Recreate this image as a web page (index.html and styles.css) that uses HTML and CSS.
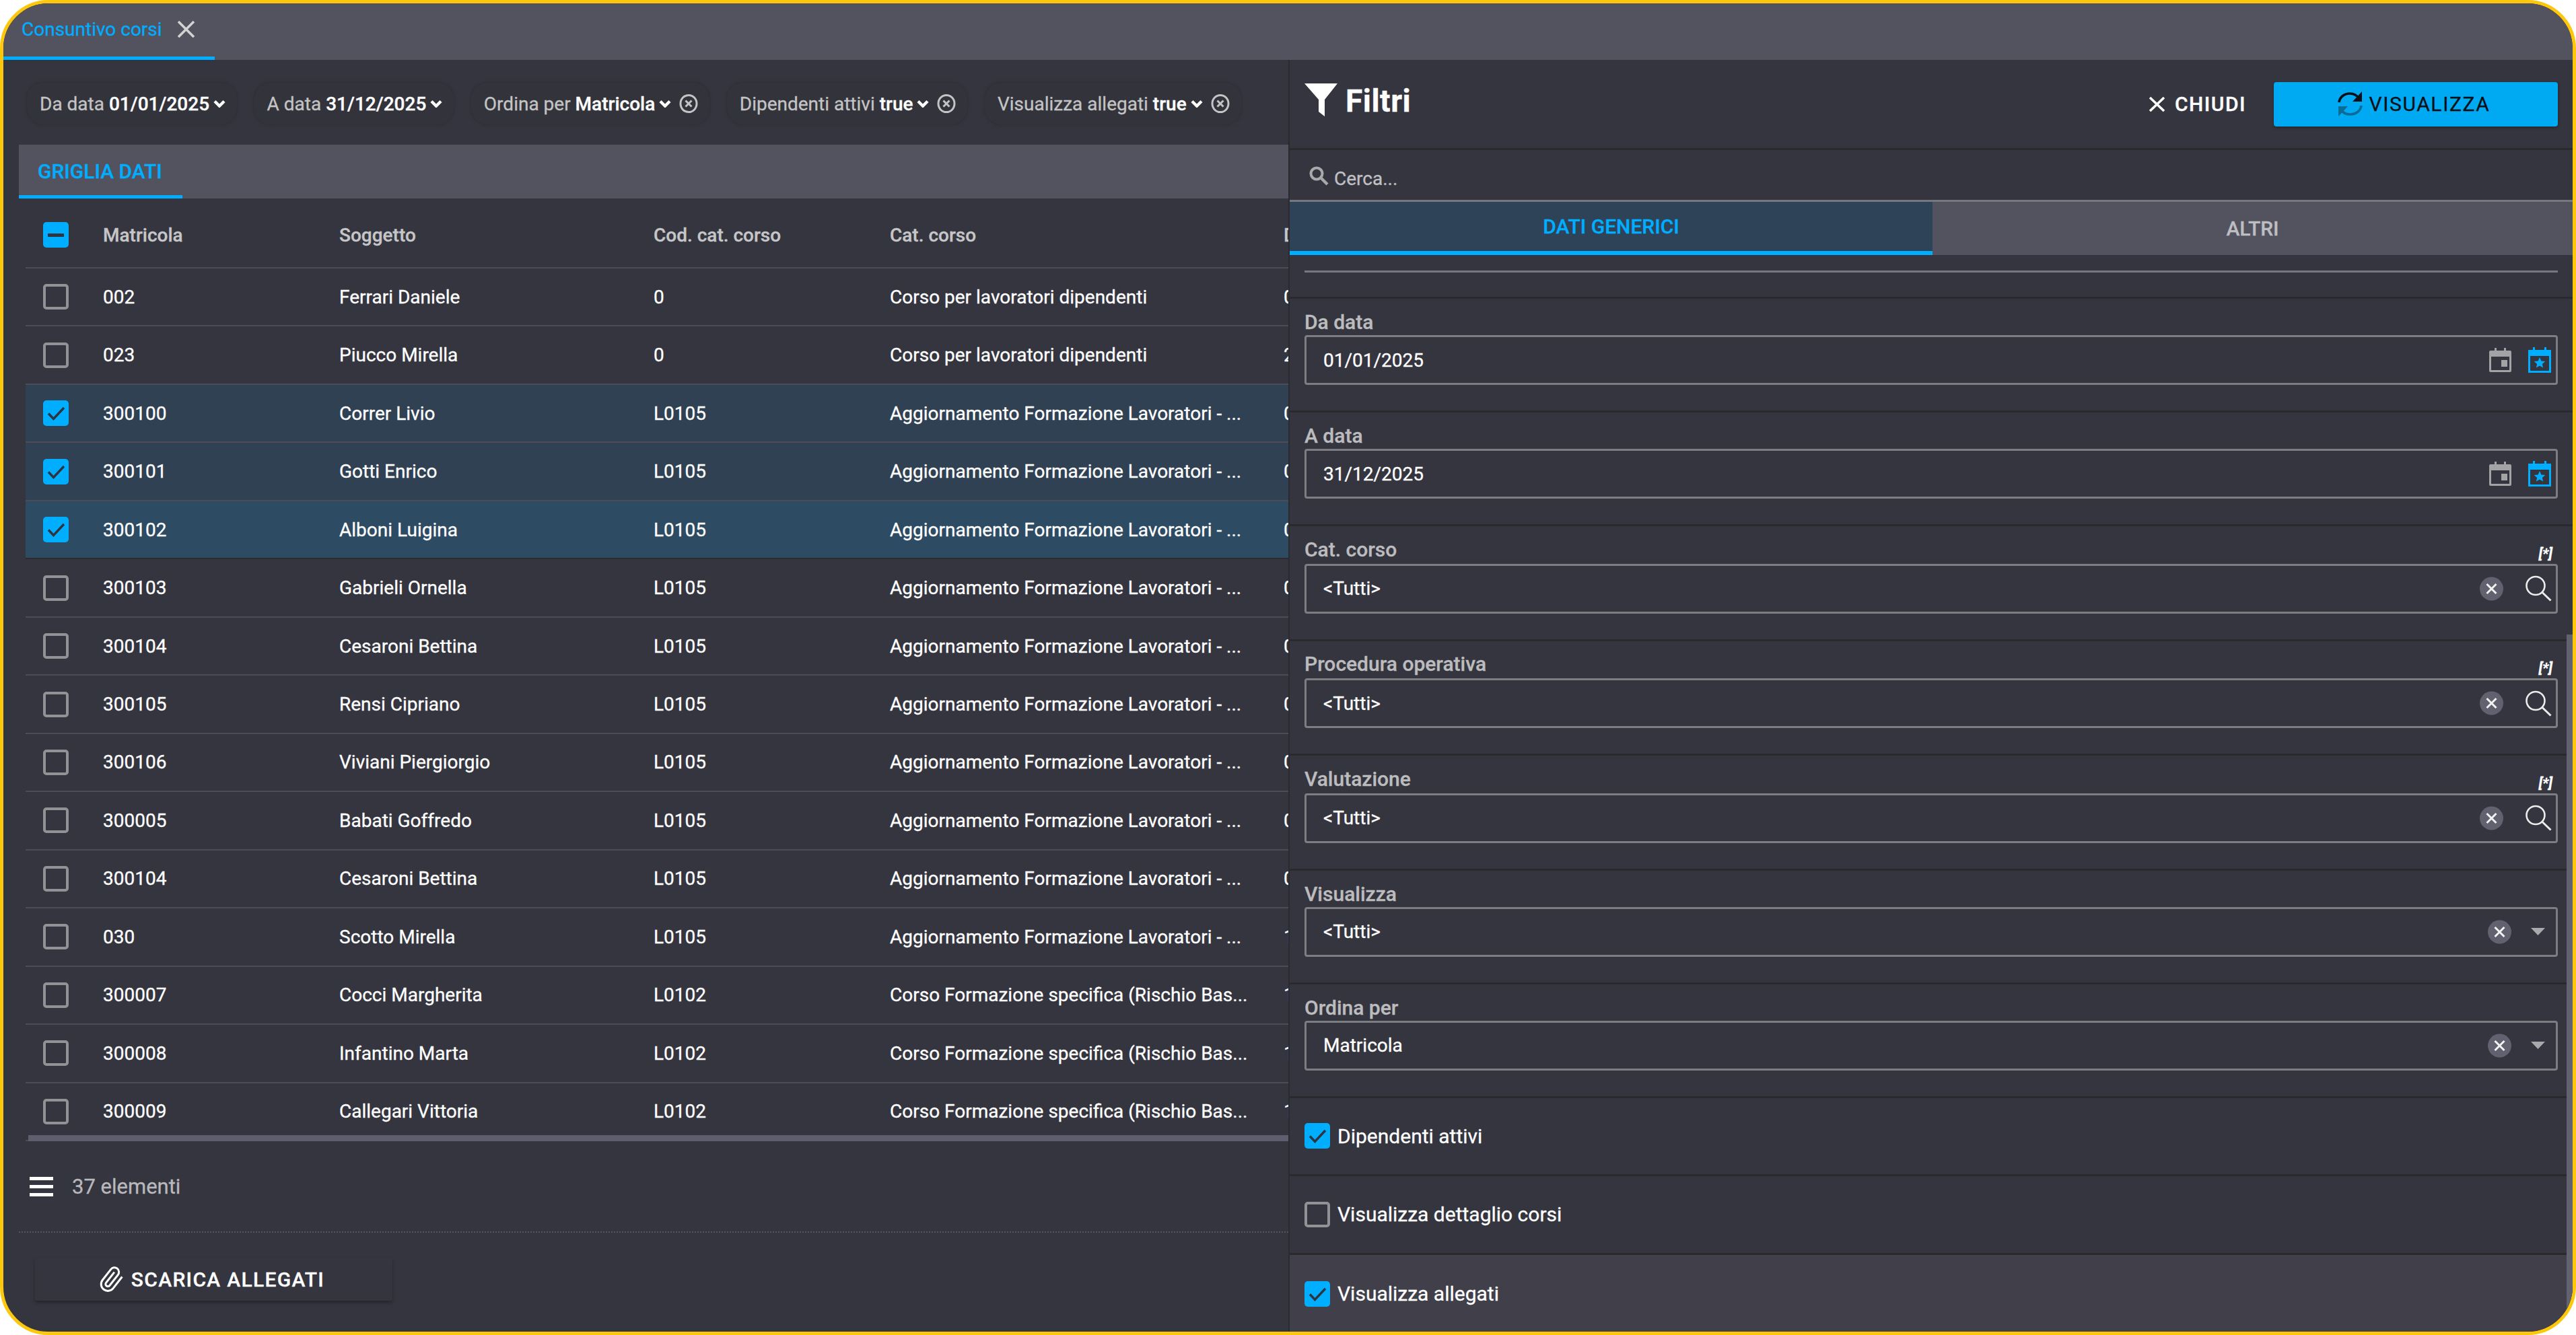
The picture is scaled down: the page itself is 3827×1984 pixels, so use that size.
FILE: index.html
```html
<!DOCTYPE html>
<html lang="it">
<head>
    <meta charset="UTF-8">
    <title>Consuntivo corsi</title>
    <link rel="stylesheet" href="styles.css">
</head>
<body>
    <!-- icone riusate -->
    <svg class="sprite" xmlns="http://www.w3.org/2000/svg">
        <symbol id="i-tick" viewBox="0 0 37 38"><path d="M7 19.5l7.5 8L30 11" fill="none" stroke="#2f3440" stroke-width="3.4"/></symbol>
        <symbol id="i-chev" viewBox="0 0 18 12"><path d="M2 2.5l7 7 7-7" fill="none" stroke="#fff" stroke-width="4.4"/></symbol>
        <symbol id="i-circle-x" viewBox="0 0 28 30"><ellipse cx="14" cy="15" rx="12" ry="12.6" fill="none" stroke="#c4c4c4" stroke-width="3"/><path d="M9.5 10.5l9 9M18.5 10.5l-9 9" stroke="#c4c4c4" stroke-width="3"/></symbol>
        <symbol id="i-cal" viewBox="0 0 33 36"><path d="M8 0h3v4h11V0h3v4h6a2 2 0 0 1 2 2v28a2 2 0 0 1-2 2H2a2 2 0 0 1-2-2V6a2 2 0 0 1 2-2h6z" fill="#a3a3a6"/><rect x="3" y="13" width="27" height="20" fill="#35353f"/><rect x="18" y="18" width="9" height="10" fill="#a3a3a6"/></symbol>
        <symbol id="i-cal-star" viewBox="0 0 34 38"><path d="M7 0h3v4h14V0h3v4h7v34H0V4h7z" fill="#00aeff"/><rect x="3" y="13" width="28" height="22" fill="#35353f"/><path d="M17 15l2.4 5.4 5.8.6-4.3 3.9 1.2 5.7-5.1-3-5.1 3 1.2-5.7L8.800 21l5.800-.6z" fill="#00aeff"/></symbol>
        <symbol id="i-clear" viewBox="0 0 35 36"><circle cx="17.500" cy="18" r="17.500" fill="#62616f"/><path d="M10.500 11l14 14M24.500 11l-14 14" stroke="#f2f2f2" stroke-width="3"/></symbol>
        <symbol id="i-lens" viewBox="0 0 40 39"><circle cx="16" cy="15.500" r="13.500" fill="none" stroke="#ececec" stroke-width="2.600"/><path d="M26 25.500l12.500 12" stroke="#ececec" stroke-width="3"/></symbol>
    </svg>

    <div class="frame">
        <div class="tabbar">
            <div class="doc-tab">
                <span>Consuntivo corsi</span>
                <svg class="doc-tab-x" viewBox="0 0 27 27"><path d="M2 2l23 23M25 2L2 25" stroke="#d2d2d2" stroke-width="3.600"/></svg>
            </div>
        </div>

        <div class="workspace">
            <!-- GRIGLIA -->
            <div class="main">
                <div class="chips">
                    <div class="chip">Da data <b>01/01/2025</b><svg class="chev"><use href="#i-chev"/></svg></div>
                    <div class="chip">A data <b>31/12/2025</b><svg class="chev"><use href="#i-chev"/></svg></div>
                    <div class="chip">Ordina per <b>Matricola</b><svg class="chev"><use href="#i-chev"/></svg><svg class="chip-x"><use href="#i-circle-x"/></svg></div>
                    <div class="chip">Dipendenti attivi <b>true</b><svg class="chev"><use href="#i-chev"/></svg><svg class="chip-x"><use href="#i-circle-x"/></svg></div>
                    <div class="chip">Visualizza allegati <b>true</b><svg class="chev"><use href="#i-chev"/></svg><svg class="chip-x"><use href="#i-circle-x"/></svg></div>
                </div>

                <div class="band">
                    <div class="band-tab">GRIGLIA DATI</div>
                </div>

                <div class="grid">
                    <div class="row head">
                        <span class="box on"><i class="dash"></i></span>
                        <span>Matricola</span><span>Soggetto</span><span>Cod. cat. corso</span><span>Cat. corso</span><span>Data</span>
                    </div>
                    <div class="row"><span class="box"></span><span>002</span><span>Ferrari Daniele</span><span>0</span><span>Corso per lavoratori dipendenti</span><span>0</span></div>
                    <div class="row"><span class="box"></span><span>023</span><span>Piucco Mirella</span><span>0</span><span>Corso per lavoratori dipendenti</span><span>2</span></div>
                    <div class="row sel"><span class="box on"><svg><use href="#i-tick"/></svg></span><span>300100</span><span>Correr Livio</span><span>L0105</span><span>Aggiornamento Formazione Lavoratori - ...</span><span>0</span></div>
                    <div class="row sel"><span class="box on"><svg><use href="#i-tick"/></svg></span><span>300101</span><span>Gotti Enrico</span><span>L0105</span><span>Aggiornamento Formazione Lavoratori - ...</span><span>0</span></div>
                    <div class="row sel hover"><span class="box on"><svg><use href="#i-tick"/></svg></span><span>300102</span><span>Alboni Luigina</span><span>L0105</span><span>Aggiornamento Formazione Lavoratori - ...</span><span>0</span></div>
                    <div class="row"><span class="box"></span><span>300103</span><span>Gabrieli Ornella</span><span>L0105</span><span>Aggiornamento Formazione Lavoratori - ...</span><span>0</span></div>
                    <div class="row"><span class="box"></span><span>300104</span><span>Cesaroni Bettina</span><span>L0105</span><span>Aggiornamento Formazione Lavoratori - ...</span><span>0</span></div>
                    <div class="row"><span class="box"></span><span>300105</span><span>Rensi Cipriano</span><span>L0105</span><span>Aggiornamento Formazione Lavoratori - ...</span><span>0</span></div>
                    <div class="row"><span class="box"></span><span>300106</span><span>Viviani Piergiorgio</span><span>L0105</span><span>Aggiornamento Formazione Lavoratori - ...</span><span>0</span></div>
                    <div class="row"><span class="box"></span><span>300005</span><span>Babati Goffredo</span><span>L0105</span><span>Aggiornamento Formazione Lavoratori - ...</span><span>0</span></div>
                    <div class="row"><span class="box"></span><span>300104</span><span>Cesaroni Bettina</span><span>L0105</span><span>Aggiornamento Formazione Lavoratori - ...</span><span>0</span></div>
                    <div class="row"><span class="box"></span><span>030</span><span>Scotto Mirella</span><span>L0105</span><span>Aggiornamento Formazione Lavoratori - ...</span><span>1</span></div>
                    <div class="row"><span class="box"></span><span>300007</span><span>Cocci Margherita</span><span>L0102</span><span>Corso Formazione specifica (Rischio Bas...</span><span>1</span></div>
                    <div class="row"><span class="box"></span><span>300008</span><span>Infantino Marta</span><span>L0102</span><span>Corso Formazione specifica (Rischio Bas...</span><span>1</span></div>
                    <div class="row"><span class="box"></span><span>300009</span><span>Callegari Vittoria</span><span>L0102</span><span>Corso Formazione specifica (Rischio Bas...</span><span>1</span></div>
                    <div class="grid-scroll"></div>
                </div>

                <div class="count">
                    <span class="burger"><i></i><i></i><i></i></span>
                    <span>37 elementi</span>
                </div>

                <div class="actions">
                    <button class="download">
                        <svg class="clip" viewBox="0 0 24 24"><path d="M21.440 11.050l-9.190 9.190a6 6 0 0 1-8.490-8.490l8.570-8.570A4 4 0 1 1 18 8.840l-8.590 8.570a2 2 0 0 1-2.830-2.830l8.490-8.480" fill="none" stroke="#fff" stroke-width="1.800"/></svg>
                        SCARICA ALLEGATI
                    </button>
                </div>
            </div>

            <!-- FILTRI -->
            <div class="panel">
                <div class="panel-head">
                    <svg class="funnel" viewBox="0 0 49 49"><path d="M0 0h49L30 24v25l-9-7V24z" fill="#fff"/></svg>
                    <span class="panel-title">Filtri</span>
                    <button class="close">
                        <svg viewBox="0 0 25 24"><path d="M2 2l21 20M23 2L2 22" stroke="#fff" stroke-width="3.600"/></svg>
                        CHIUDI
                    </button>
                    <button class="show">
                        <svg viewBox="0 0 37 37">
                            <path d="M2 16C3 8 10 3 18 3c6 0 11 3 14 8" fill="none" stroke="#0b0f16" stroke-width="3.600"/>
                            <path d="M36 0v15H22z" fill="#0b0f16"/>
                            <path d="M35 21c-1 8-8 13-17 13-6 0-11-3-14-8" fill="none" stroke="#0a6d97" stroke-width="3.600"/>
                            <path d="M1 37V22h14z" fill="#0a6d97"/>
                        </svg>
                        VISUALIZZA
                    </button>
                </div>

                <div class="search">
                    <svg viewBox="0 0 29 29"><circle cx="11" cy="11" r="8.500" fill="none" stroke="#a9a9ab" stroke-width="4"/><path d="M17 17l10 10" stroke="#a9a9ab" stroke-width="4.400"/></svg>
                    <span>Cerca...</span>
                </div>

                <div class="panel-tabs">
                    <div class="panel-tab active">DATI GENERICI</div>
                    <div class="panel-tab">ALTRI</div>
                </div>

                <div class="rule-wrap"><div class="rule"></div></div>

                <div class="field">
                    <div class="label">Da data</div>
                    <div class="input"><span>01/01/2025</span><svg class="ic-cal"><use href="#i-cal"/></svg><svg class="ic-cal-star"><use href="#i-cal-star"/></svg></div>
                </div>
                <div class="field">
                    <div class="label">A data</div>
                    <div class="input"><span>31/12/2025</span><svg class="ic-cal"><use href="#i-cal"/></svg><svg class="ic-cal-star"><use href="#i-cal-star"/></svg></div>
                </div>
                <div class="field lookup">
                    <div class="label">Cat. corso<em>[*]</em></div>
                    <div class="input"><span>&lt;Tutti&gt;</span><svg class="ic-clear"><use href="#i-clear"/></svg><svg class="ic-lens"><use href="#i-lens"/></svg></div>
                </div>
                <div class="field lookup">
                    <div class="label">Procedura operativa<em>[*]</em></div>
                    <div class="input"><span>&lt;Tutti&gt;</span><svg class="ic-clear"><use href="#i-clear"/></svg><svg class="ic-lens"><use href="#i-lens"/></svg></div>
                </div>
                <div class="field lookup">
                    <div class="label">Valutazione<em>[*]</em></div>
                    <div class="input"><span>&lt;Tutti&gt;</span><svg class="ic-clear"><use href="#i-clear"/></svg><svg class="ic-lens"><use href="#i-lens"/></svg></div>
                </div>
                <div class="field">
                    <div class="label">Visualizza</div>
                    <div class="input"><span>&lt;Tutti&gt;</span><svg class="ic-clear"><use href="#i-clear"/></svg><i class="caret"></i></div>
                </div>
                <div class="field">
                    <div class="label">Ordina per</div>
                    <div class="input"><span>Matricola</span><svg class="ic-clear"><use href="#i-clear"/></svg><i class="caret"></i></div>
                </div>

                <div class="flag"><span class="box on"><svg><use href="#i-tick"/></svg></span>Dipendenti attivi</div>
                <div class="flag"><span class="box"></span>Visualizza dettaglio corsi</div>
                <div class="flag hover"><span class="box on"><svg><use href="#i-tick"/></svg></span>Visualizza allegati</div>

                <div class="panel-scroll"></div>
            </div>
        </div>
    </div>
</body>
</html>
```

FILE: styles.css
```css
* { box-sizing: border-box; }

html, body {
    margin: 0;
    height: 100%;
    background: #fff;
}

body {
    font-family: Roboto, "Liberation Sans", sans-serif;
    font-size: 28px;
    color: #fff;
    overflow: hidden;
    -webkit-text-stroke: 0.3px currentColor;
}

.sprite { display: none; }

button {
    font-family: inherit;
    border: 0;
    cursor: pointer;
}

.frame {
    height: 100vh;
    display: flex;
    flex-direction: column;
    border: 5px solid #fdc70c;
    border-radius: 72px;
    background: #35353f;
    overflow: hidden;
}

/* barra documenti */
.tabbar {
    height: 84px;
    flex: none;
    background: #53525f;
}

.doc-tab {
    width: 314px;
    height: 84px;
    display: flex;
    align-items: center;
    gap: 22px;
    padding: 0 0 2px 27px;
    border-bottom: 5px solid #00aeff;
    color: #00aeff;
}

.doc-tab-x { width: 27px; height: 27px; }

.workspace {
    flex: 1;
    display: flex;
    min-height: 0;
}

/* griglia */
.main {
    width: 1909px;
    flex: none;
    overflow: hidden;
}

.chips {
    display: flex;
    gap: 25.5px;
    padding: 34px 0 0 35px;
}

.chip {
    height: 62px;
    display: flex;
    align-items: center;
    padding: 0 17px 0 19px;
    border-radius: 24px;
    background: #33333c;
    box-shadow: 0 0 4px #2c2c34;
    color: #c4c4c4;
    white-space: pre;
}

.chip b {
    font-weight: 500;
    color: #fff;
}

.chev {
    width: 18px;
    height: 12px;
    margin-left: 6px;
}

.chip-x {
    width: 28px;
    height: 30px;
    margin-left: 12px;
}

.band {
    height: 80px;
    margin: 30px 0 0 23px;
    background: #53525f;
}

.band-tab {
    width: 243px;
    height: 80px;
    padding: 22px 0 0 28px;
    border-bottom: 5px solid #00aeff;
    color: #00aeff;
    font-size: 30px;
    font-weight: 500;
}

.grid {
    position: relative;
    margin-left: 33px;
}

.row {
    height: 86.47px;
    display: grid;
    grid-template-columns: 115px 351px 467px 351px 585px 1fr;
    align-items: center;
    border-bottom: 2px solid #4c4c56;
    white-space: nowrap;
    overflow: hidden;
}

.row.head {
    height: 104px;
    padding-top: 6px;
    font-weight: 500;
    color: #c6c6c8;
}

.row.sel { background: #2f4152; }
.row.hover { background: #2d4b63; border-bottom-color: #2a2a2f; }

.box {
    width: 38px;
    height: 38px;
    display: flex;
    align-items: center;
    justify-content: center;
    flex: none;
    border: 4px solid #929296;
    border-radius: 5px;
}

.row .box { margin-left: 26px; }

.box.on {
    border: 0;
    background: #00aeff;
}

.box svg { width: 37px; height: 38px; }

.dash {
    width: 24px;
    height: 5px;
    background: #2f3440;
}

.grid-scroll {
    position: absolute;
    left: 4px;
    right: 0;
    bottom: 0;
    height: 9px;
    background: #5f5e6e;
}

.count {
    height: 134px;
    display: flex;
    align-items: center;
    gap: 28px;
    padding-left: 39px;
    color: #b9b9bd;
    font-size: 31px;
}

.burger {
    width: 35px;
    display: flex;
    flex-direction: column;
    gap: 7px;
}

.burger i {
    height: 5px;
    background: #fff;
}

.actions {
    margin-left: 23px;
    padding: 37px 0 0 24px;
    border-top: 2px dotted #55555f;
}

.download {
    width: 531px;
    height: 64px;
    display: flex;
    align-items: center;
    justify-content: center;
    gap: 9px;
    padding-right: 13px;
    background: #35353f;
    box-shadow: 0 3px 5px #26262c;
    border-radius: 3px;
    color: #fff;
    font-size: 30px;
    font-weight: 500;
    letter-spacing: 1.3px;
}

.clip {
    width: 40px;
    height: 40px;
    transform: rotate(-7deg);
}

/* filtri */
.panel {
    position: relative;
    flex: 1;
    border-left: 2px solid #2a2a2f;
    overflow: hidden;
}

.panel-head {
    height: 134px;
    display: flex;
    align-items: center;
    padding: 0 22px;
    border-bottom: 3px solid #2a2a2e;
}

.funnel {
    width: 49px;
    height: 49px;
    margin-top: -12px;
}

.panel-title {
    margin: -10px 0 0 12px;
    font-size: 46px;
    font-weight: 700;
    letter-spacing: 0.5px;
}

.close {
    display: flex;
    align-items: center;
    gap: 14px;
    margin-left: auto;
    background: none;
    color: #fff;
    font-size: 30px;
    font-weight: 500;
    letter-spacing: 1.5px;
}

.close svg { width: 25px; height: 24px; }

.show {
    width: 422px;
    height: 66px;
    display: flex;
    align-items: center;
    justify-content: center;
    gap: 10px;
    margin-left: 35px;
    padding-right: 12px;
    background: #00aaf2;
    border-radius: 4px;
    box-shadow: 0 2px 4px #25252b;
    color: #0b0f16;
    font-size: 30px;
    letter-spacing: 1.6px;
}

.show svg { width: 37px; height: 37px; }

.search {
    height: 77px;
    display: flex;
    align-items: center;
    gap: 8px;
    padding: 10px 0 0 29px;
    border-bottom: 3px solid #77777f;
    color: #c0c0c4;
}

.search svg { width: 29px; height: 29px; margin-top: -8px; }

.panel-tabs {
    display: flex;
    height: 79px;
}

.panel-tab {
    flex: 1;
    display: flex;
    align-items: center;
    justify-content: center;
    background: #53525f;
    color: #bdbdc2;
    font-size: 30px;
    font-weight: 500;
}

.panel-tab.active {
    width: 955px;
    flex: none;
    background: #2e4357;
    border-bottom: 6px solid #00aeff;
    color: #00aeff;
}

.rule-wrap {
    height: 65px;
    padding: 23px 22px 0;
    border-bottom: 3px solid #2a2a2e;
}

.rule {
    height: 3px;
    background: #77777f;
}

.field {
    height: 169px;
    padding: 0 22px;
    border-bottom: 3px solid #2a2a2e;
}

.field.lookup { height: 170.5px; }

.label {
    height: 54px;
    display: flex;
    align-items: flex-end;
    justify-content: space-between;
    padding: 0 8px 2px 0;
    color: #bcbcbe;
    font-size: 30px;
    font-weight: 500;
}

.lookup .label { height: 55.5px; padding-bottom: 4px; }

.label em {
    font-size: 21px;
    font-weight: 700;
    color: #fff;
    margin-bottom: -1px;
}

.input {
    height: 74px;
    display: flex;
    align-items: center;
    padding: 0 6px 0 25px;
    border: 3px solid #7d7d84;
    border-radius: 4px;
}

.input span { margin-right: auto; }

.ic-cal { width: 33px; height: 36px; }
.ic-cal-star { width: 34px; height: 38px; margin: 0 1px 0 25px; }
.ic-clear { width: 35px; height: 36px; }
.ic-lens { width: 40px; height: 39px; margin-left: 32px; }

.caret {
    width: 21px;
    height: 11px;
    margin: 0 10px 0 29px;
    background: #a9a9ad;
    clip-path: polygon(0 0, 100% 0, 50% 100%);
}

.flag {
    height: 116.5px;
    display: flex;
    align-items: center;
    gap: 11px;
    padding-left: 22px;
    border-bottom: 3px solid #2a2a2e;
    font-size: 30px;
}

.flag .box { height: 38px; }
.flag.hover { background: #403f4a; border-bottom: 0; }

.panel-scroll {
    position: absolute;
    top: 854px;
    right: 0;
    bottom: 0;
    width: 9px;
    background: #62616f;
}
```
